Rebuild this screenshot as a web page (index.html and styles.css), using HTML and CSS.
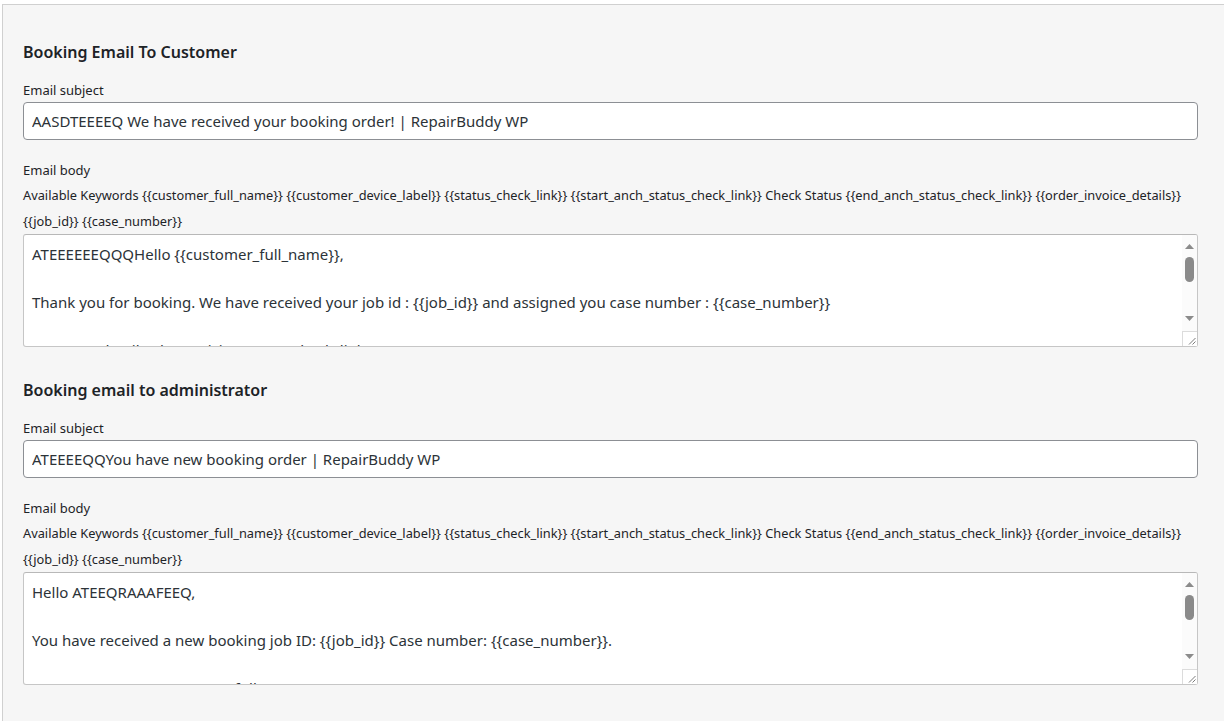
FILE: index.html
```html
<!DOCTYPE html>
<html lang="en">
<head>
  <meta charset="UTF-8">
  <title>Booking Emails</title>
  <link rel="stylesheet" href="styles.css">
</head>
<body>

<div class="settings-panel">

  <div class="email-section">
    <h2>Booking Email To Customer</h2>

    <label class="field-label" for="customerSubject">Email subject</label>
    <input type="text" id="customerSubject" class="text-input" value="AASDTEEEEQ We have received your booking order! | RepairBuddy WP">

    <label class="field-label" for="customerBody">Email body</label>
    <p class="keywords">Available Keywords {{customer_full_name}} {{customer_device_label}} {{status_check_link}} {{start_anch_status_check_link}} Check Status {{end_anch_status_check_link}} {{order_invoice_details}} {{job_id}} {{case_number}}</p>
    <div class="body-field">
      <textarea id="customerBody" class="body-input">ATEEEEEEQQQHello {{customer_full_name}},

Thank you for booking. We have received your job id : {{job_id}} and assigned you case number : {{case_number}}

For more details please visit {{status_check_link}}

{{order_invoice_details}}

Thank you again for your business!

Regards,
RepairBuddy WP</textarea>
      <div class="scrollbar" aria-hidden="true">
        <svg class="sb-arrow sb-up" width="9" height="5" viewBox="0 0 9 5"><polygon points="0,5 4.5,0 9,5"/></svg>
        <div class="sb-thumb"></div>
        <svg class="sb-arrow sb-down" width="9" height="5" viewBox="0 0 9 5"><polygon points="0,0 9,0 4.5,5"/></svg>
        <div class="sb-corner">
          <svg width="8" height="8" viewBox="0 0 8 8"><path d="M1 7.5 L7.5 1 M4.5 7.5 L7.5 4.5"/></svg>
        </div>
      </div>
    </div>
  </div>

  <div class="email-section">
    <h2>Booking email to administrator</h2>

    <label class="field-label" for="adminSubject">Email subject</label>
    <input type="text" id="adminSubject" class="text-input" value="ATEEEEQQYou have new booking order | RepairBuddy WP">

    <label class="field-label" for="adminBody">Email body</label>
    <p class="keywords">Available Keywords {{customer_full_name}} {{customer_device_label}} {{status_check_link}} {{start_anch_status_check_link}} Check Status {{end_anch_status_check_link}} {{order_invoice_details}} {{job_id}} {{case_number}}</p>
    <div class="body-field">
      <textarea id="adminBody" class="body-input">Hello ATEEQRAAAFEEQ,

You have received a new booking job ID: {{job_id}} Case number: {{case_number}}.

From: Customer {{customer_full_name}}

Device: {{customer_device_label}}

{{order_invoice_details}}

Regards,
RepairBuddy WP</textarea>
      <div class="scrollbar" aria-hidden="true">
        <svg class="sb-arrow sb-up" width="9" height="5" viewBox="0 0 9 5"><polygon points="0,5 4.5,0 9,5"/></svg>
        <div class="sb-thumb"></div>
        <svg class="sb-arrow sb-down" width="9" height="5" viewBox="0 0 9 5"><polygon points="0,0 9,0 4.5,5"/></svg>
        <div class="sb-corner">
          <svg width="8" height="8" viewBox="0 0 8 8"><path d="M1 7.5 L7.5 1 M4.5 7.5 L7.5 4.5"/></svg>
        </div>
      </div>
    </div>
  </div>

</div>

</body>
</html>
```
FILE: styles.css
```css
body {
  margin: 0;
  background-color: #fff;
  font-family: "Noto Sans", "Open Sans", sans-serif;
  color: #1d2327;
}

.settings-panel {
  margin: 4px 0 0 2px;
  background-color: #f6f6f6;
  border-top: 1px solid #d0d0d0;
  border-left: 1px solid #d0d0d0;
  padding: 35px 26px 40px 20px;
}

.email-section {
  display: flex;
  flex-direction: column;
  margin-bottom: 31px;
}

.email-section h2 {
  margin: 0 0 16px;
  font-size: 16px;
  line-height: 24px;
  font-weight: 600;
  color: #1d2327;
}

.field-label {
  font-size: 13px;
  line-height: 20px;
  margin-bottom: 2px;
}

.text-input {
  box-sizing: border-box;
  height: 38px;
  margin: 0 0 20px;
  padding: 0 8px;
  border: 1px solid #8c8f94;
  border-radius: 4px;
  background: #fff;
  font-family: inherit;
  font-size: 15px;
  color: #2c3338;
}

.keywords {
  margin: 0;
  font-size: 12.8px;
  line-height: 26px;
  color: #1d2327;
}

.body-field {
  position: relative;
}

.body-input {
  display: block;
  box-sizing: border-box;
  width: 100%;
  height: 113px;
  margin: 0;
  padding: 7px 24px 7px 8px;
  border: 1px solid #c6c6c6;
  border-top-color: #b8b8b8;
  border-radius: 3px;
  background: #fff;
  font-family: inherit;
  font-size: 15px;
  line-height: 24px;
  color: #2c3338;
  overflow: hidden;
  resize: none;
}

/* drawn scrollbar, sits over the textarea's right edge */
.scrollbar {
  position: absolute;
  top: 1px;
  right: 1px;
  bottom: 1px;
  width: 15px;
  background: #fbfbfb;
  display: flex;
  flex-direction: column;
  align-items: center;
  border-radius: 0 2px 2px 0;
}
.sb-arrow {
  display: block;
  fill: #8b8b8b;
  flex-shrink: 0;
}
.sb-up {
  margin-top: 9px;
}
.sb-thumb {
  width: 9px;
  height: 25px;
  margin-top: 8px;
  border-radius: 5px;
  background: #8a8a8a;
  flex-shrink: 0;
}
.sb-down {
  margin-top: 34px;
}
.sb-corner {
  box-sizing: border-box;
  width: 15px;
  height: 15px;
  margin-top: auto;
  border-top: 1px solid #dcdcdc;
  border-left: 1px solid #dcdcdc;
  background: #fff;
  display: flex;
  align-items: flex-end;
  justify-content: flex-end;
}
.sb-corner svg {
  display: block;
  margin: 0 1px 1px 0;
  stroke: #7a7a7a;
  stroke-width: 1;
  fill: none;
}
```
